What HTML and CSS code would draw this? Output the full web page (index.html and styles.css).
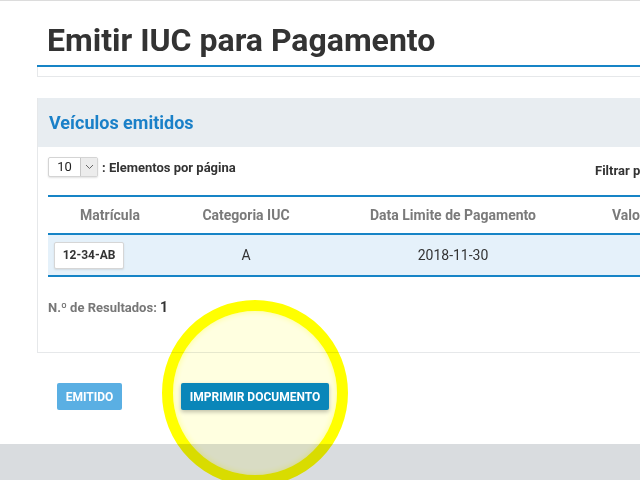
FILE: index.html
```html
<!DOCTYPE html>
<html lang="pt">
<head>
  <meta charset="UTF-8" />
  <title>Emitir IUC para Pagamento</title>
  <link rel="stylesheet" href="styles.css">
</head>
<body>
  <div class="topbar"></div>

  <div class="page">
    <div class="page-header">
      <h1>Emitir IUC para Pagamento</h1>
    </div>
    <div class="page-strip"></div>

    <div class="panel">
      <div class="panel-heading">Veículos emitidos</div>
      <div class="panel-body">
        <div class="toolbar">
          <div class="per-page">
            <span class="select">
              <span class="select-value">10</span>
              <span class="select-arrow">
                <svg width="9" height="6" viewBox="0 0 9 6"><path d="M1 1 L4.5 4.5 L8 1" fill="none" stroke="#666" stroke-width="1"/></svg>
              </span>
            </span>
            <span class="per-page-label">: Elementos por página</span>
          </div>
          <div class="filter">Filtrar por:</div>
        </div>

        <table class="grid">
          <colgroup>
            <col class="c1"><col class="c2"><col class="c3"><col class="c4">
          </colgroup>
          <thead>
            <tr>
              <th>Matrícula</th>
              <th>Categoria IUC</th>
              <th>Data Limite de Pagamento</th>
              <th>Valor IUC</th>
            </tr>
          </thead>
          <tbody>
            <tr>
              <td class="left"><span class="plate">12-34-AB</span></td>
              <td>A</td>
              <td>2018-11-30</td>
              <td></td>
            </tr>
          </tbody>
        </table>

        <div class="results">N.º de Resultados: <span>1</span></div>
      </div>
    </div>

    <div class="actions">
      <button class="btn btn-light">Emitido</button>
      <button class="btn btn-primary">Imprimir documento</button>
    </div>
  </div>

  <div class="footer"></div>

  <div class="highlight"></div>
</body>
</html>
```

FILE: styles.css
```css
body {
  margin: 0;
  font-family: Roboto, "Liberation Sans", sans-serif;
  background: #fff;
  color: #333;
  overflow: hidden;
  width: 640px;
  height: 480px;
  position: relative;
}

.topbar {
  height: 1px;
  background: #dcdcdc;
}

.page {
  width: 760px;
  padding-left: 37px;
}

.page-header {
  padding: 20px 0 0 10px;
  height: 44px;
  border-bottom: 2px solid #1684c6;
}

h1 {
  margin: 0;
  font-size: 32px;
  font-weight: 700;
  line-height: 38px;
  color: #333;
}

.page-strip {
  height: 9px;
  border: 1px solid #e6e8ea;
  border-top: none;
}

.panel {
  margin-top: 21px;
  border: 1px solid #e6e8ea;
  border-top: none;
}

.panel-heading {
  background: #e8edf1;
  height: 49px;
  line-height: 49px;
  padding-left: 11px;
  font-size: 18px;
  font-weight: 700;
  color: #1a80c8;
}

.panel-body {
  padding: 10px 0 37px 10px;
}

.toolbar {
  display: flex;
  justify-content: space-between;
  align-items: center;
  height: 20px;
}

.per-page {
  display: flex;
  align-items: center;
  gap: 4px;
}

.select {
  display: flex;
  width: 48px;
  height: 18px;
  border: 1px solid #d4d4d4;
  border-radius: 2px;
  box-shadow: 0 1px 2px rgba(0,0,0,0.12);
  background: #fff;
}

.select-value {
  flex: 1;
  text-align: center;
  font-size: 13px;
  line-height: 18px;
  color: #222;
}

.select-arrow {
  width: 16px;
  background: #ececec;
  border-left: 1px solid #c8c8c8;
  display: flex;
  align-items: center;
  justify-content: center;
}

.per-page-label {
  font-size: 13px;
  font-weight: 700;
  color: #333;
}

.filter {
  font-size: 13px;
  font-weight: 700;
  color: #333;
  width: 201px;
  margin-top: 6px;
}

table.grid {
  margin-top: 18px;
  border-collapse: collapse;
  table-layout: fixed;
  width: 712px;
}

col.c1 { width: 124px; }
col.c2 { width: 148px; }
col.c3 { width: 266px; }
col.c4 { width: 174px; }

.grid th {
  height: 36px;
  border-top: 2px solid #1684c6;
  border-bottom: 2px solid #1684c6;
  font-size: 14px;
  font-weight: 700;
  color: #7a7a7a;
  text-align: center;
  padding: 0;
}

.grid th:last-child {
  text-align: left;
  padding-left: 26px;
}

.grid td {
  height: 40px;
  background: #e5f1fa;
  border-bottom: 2px solid #1684c6;
  text-align: center;
  font-size: 14px;
  color: #333;
  padding: 0;
}

.grid td.left {
  text-align: left;
  padding-left: 6px;
}

.plate {
  display: inline-block;
  width: 68px;
  height: 25px;
  line-height: 25px;
  text-align: center;
  background: #fff;
  border: 1px solid #d6d6d6;
  border-radius: 2px;
  box-shadow: 0 1px 2px rgba(0,0,0,0.1);
  font-size: 12px;
  font-weight: 700;
  color: #333;
}

.results {
  margin-top: 22px;
  font-size: 13px;
  font-weight: 700;
  color: #777;
}

.results span {
  color: #333;
  font-size: 14px;
}

.actions {
  display: flex;
  gap: 59px;
  padding: 30px 0 0 20px;
}

.btn {
  height: 27px;
  border: none;
  border-radius: 2px;
  color: #fff;
  font-family: Roboto, "Liberation Sans", sans-serif;
  font-size: 12px;
  font-weight: 700;
  text-transform: uppercase;
  padding: 0;
}

.btn-light {
  width: 65px;
  background: #5aafe3;
}

.btn-primary {
  position: relative;
  z-index: 2;
  width: 148px;
  background: #0a86b9;
  box-shadow: 0 2px 4px rgba(0,0,0,0.25);
}

.footer {
  position: absolute;
  left: 0;
  right: 0;
  top: 444px;
  height: 40px;
  background: #d9dcdf;
}

.highlight {
  position: absolute;
  z-index: 1;
  left: 162px;
  top: 300px;
  width: 164px;
  height: 164px;
  border: 11px solid #ffff00;
  border-radius: 50%;
  background: rgba(255, 255, 0, 0.12);
  box-shadow: inset 0 0 6px rgba(255, 255, 0, 0.4);
  mix-blend-mode: multiply;
}
```
